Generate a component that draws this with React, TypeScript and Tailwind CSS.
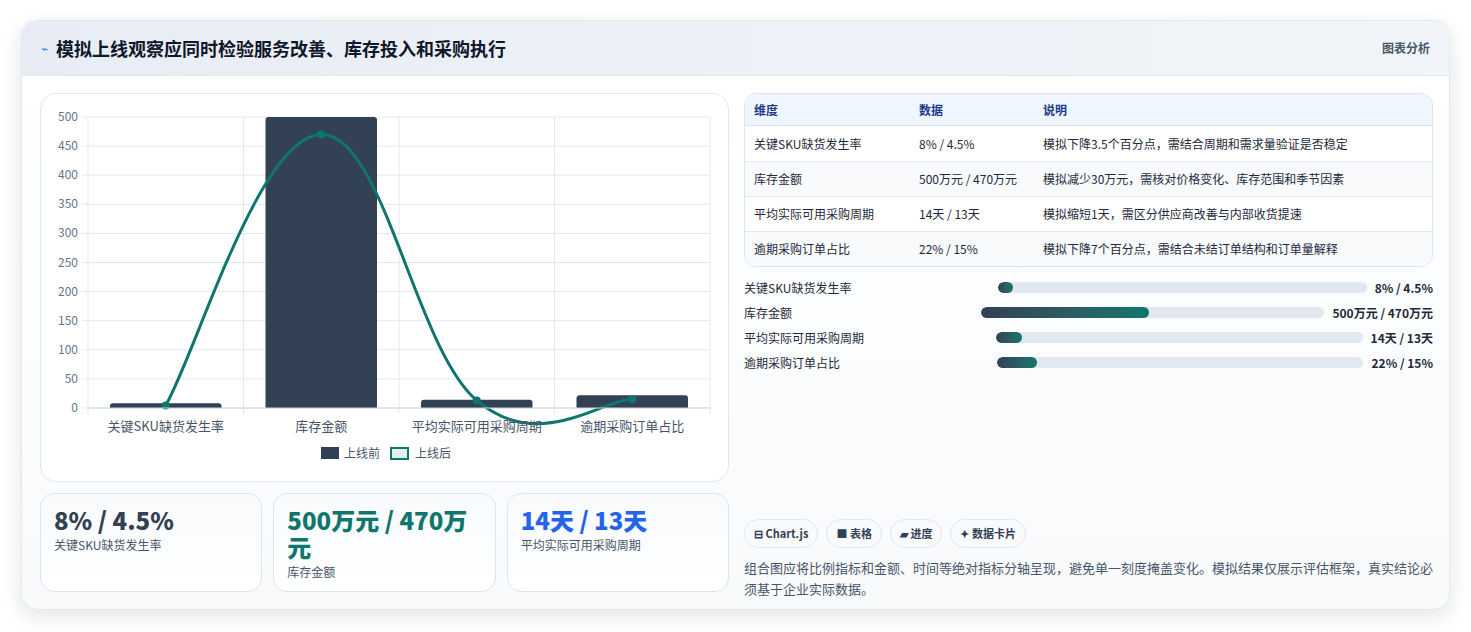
import React from "react";

const F = { fontFamily: '"Noto Sans CJK SC", "Noto Sans", sans-serif' };

function Chart() {
  const L = 47, T = 23, B = 314, R = 669;
  const s = (v: number) => B - v * 0.582;
  const cw = (R - L) / 4;
  const cats = ["关键SKU缺货发生率", "库存金额", "平均实际可用采购周期", "逾期采购订单占比"];
  const before = [8, 500, 14, 22];
  const after = [4.5, 470, 13, 15];
  const pts = after.map((v, i) => [L + cw * (i + 0.5), s(v)]);
  let d = `M${pts[0][0]},${pts[0][1]}`;
  for (let i = 0; i < pts.length - 1; i++) {
    const p0 = pts[i - 1] || pts[i], p1 = pts[i], p2 = pts[i + 1], p3 = pts[i + 2] || p2;
    const t = 0.4 / 1;
    const c1 = [p1[0] + (p2[0] - p0[0]) * t / 2, p1[1] + (p2[1] - p0[1]) * t / 2];
    const c2 = [p2[0] - (p3[0] - p1[0]) * t / 2, p2[1] - (p3[1] - p1[1]) * t / 2];
    d += ` C${c1[0]},${c1[1]} ${c2[0]},${c2[1]} ${p2[0]},${p2[1]}`;
  }
  const ticks = [0, 50, 100, 150, 200, 250, 300, 350, 400, 450, 500];
  return (
    <svg width="688" height="386" style={F}>
      {ticks.map((t) => (
        <g key={t}>
          <line x1={L - 6} x2={R} y1={s(t)} y2={s(t)} stroke="#e2e8f0" />
          <text x={L - 10} y={s(t) + 4} fontSize="12" textAnchor="end" fill="#64748b">{t}</text>
        </g>
      ))}
      {[0, 1, 2, 3, 4].map((i) => (
        <line key={i} x1={L + cw * i} x2={L + cw * i} y1={T} y2={B + 6} stroke="#e2e8f0" />
      ))}
      {before.map((v, i) => (
        <path key={i} d={`M${L + cw * i + 22},${B} V${s(v) + 3} q0,-3 3,-3 H${L + cw * (i + 1) - 25} q3,0 3,3 V${B} Z`} fill="#334155" />
      ))}
      <path d={d} fill="none" stroke="#0f766e" strokeWidth="3" />
      {pts.map((p, i) => <circle key={i} cx={p[0]} cy={p[1]} r="4" fill="#0f766e" />)}
      <line x1={L} x2={R} y1={B} y2={B} stroke="#cbd5e1" />
      {cats.map((c, i) => (
        <text key={c} x={L + cw * (i + 0.5)} y={337} fontSize="13" textAnchor="middle" fill="#475569">{c}</text>
      ))}
      <rect x="280" y="353" width="18" height="12" fill="#334155" />
      <text x="303" y="364" fontSize="12" fill="#475569">上线前</text>
      <rect x="350" y="354" width="17" height="11" fill="#e0efed" stroke="#0f766e" strokeWidth="2" />
      <text x="374" y="364" fontSize="12" fill="#475569">上线后</text>
    </svg>
  );
}

const rows = [
  ["关键SKU缺货发生率", "8% / 4.5%", "模拟下降3.5个百分点，需结合周期和需求量验证是否稳定", 4],
  ["库存金额", "500万元 / 470万元", "模拟减少30万元，需核对价格变化、库存范围和季节因素", 49],
  ["平均实际可用采购周期", "14天 / 13天", "模拟缩短1天，需区分供应商改善与内部收货提速", 7],
  ["逾期采购订单占比", "22% / 15%", "模拟下降7个百分点，需结合未结订单结构和订单量解释", 11],
] as const;

export default function App() {
  return (
    <div className="w-[1471px] h-[632px] bg-white pt-[20px] pl-[21px]" style={F}>
      <div className="w-[1429px] h-[590px] rounded-[16px] border border-[#e2e8f0] shadow-[0_6px_20px_rgba(15,23,42,0.12)] overflow-hidden bg-gradient-to-b from-white to-[#f8fafc]">
        <div className="h-[55px] flex items-center justify-between px-[19px] bg-gradient-to-r from-[#e8edf5] to-[#f1f5f9] border-b border-[#e2e8f0]">
          <div className="flex items-center gap-[8px]">
            <span className="text-[#3b82f6] text-[12px]">⌁</span>
            <span className="text-[18px] font-bold text-[#0f172a]">模拟上线观察应同时检验服务改善、库存投入和采购执行</span>
          </div>
          <span className="text-[12px] font-semibold text-[#475569]">图表分析</span>
        </div>
        <div className="flex gap-[15px] pl-[18px] pt-[17px]">
          <div className="w-[689px] flex flex-col gap-[11px]">
            <div className="h-[389px] rounded-[16px] border border-[#e2e8f0] bg-white overflow-hidden"><Chart /></div>
            <div className="grid grid-cols-3 gap-[11px]">
              {[["8% / 4.5%", "关键SKU缺货发生率", "text-[#334155]"], ["500万元 / 470万元", "库存金额", "text-[#0f766e]"], ["14天 / 13天", "平均实际可用采购周期", "text-[#2563eb]"]].map(([v, l, c]) => (
                <div key={l} className="h-[99px] rounded-[14px] border border-[#dbe5f1] bg-gradient-to-b from-[#f8fafc] to-white px-[13px] pt-[12px]">
                  <div className={`text-[24px] font-extrabold leading-[27px] ${c}`}>{v}</div>
                  <div className="text-[12px] text-[#475569] mt-[3px]">{l}</div>
                </div>
              ))}
            </div>
          </div>
          <div className="w-[689px] flex flex-col">
            <div className="rounded-[12px] border border-[#dbe5f1] overflow-hidden bg-white">
              <div className="flex h-[32px] items-center bg-[#eff6ff] border-b border-[#dbe5f1] text-[12px] font-bold text-[#1e3a8a]">
                <div className="w-[174px] pl-[9px]">维度</div><div className="w-[124px]">数据</div><div>说明</div>
              </div>
              {rows.map((r, i) => (
                <div key={i} className={`flex h-[35px] items-center text-[12px] text-[#1e293b] ${i ? "border-t border-[#e2e8f0]" : ""} ${i % 2 ? "bg-[#f8fafc]" : "bg-white"}`}>
                  <div className="w-[174px] pl-[9px]">{r[0]}</div><div className="w-[124px]">{r[1]}</div><div>{r[2]}</div>
                </div>
              ))}
            </div>
            <div className="flex flex-col gap-[8px] mt-[12px]">
              {rows.map((r, i) => (
                <div key={i} className="flex items-center gap-[8px] h-[17px] text-[12px] text-[#1e293b]">
                  <div className="flex-[2] whitespace-nowrap">{r[0]}</div>
                  <div className="flex-[3] h-[11px] rounded-full bg-[#e2e8f0] overflow-hidden">
                    <div className="h-full rounded-full bg-gradient-to-r from-[#334155] to-[#0f766e]" style={{ width: `${r[3]}%` }} />
                  </div>
                  <div className="font-bold whitespace-nowrap">{r[1]}</div>
                </div>
              ))}
            </div>
            <div className="flex gap-[8px] mt-[148px]">
              {["⊟ Chart.js", "■ 表格", "▰ 进度", "✦ 数据卡片"].map((c) => (
                <span key={c} className="h-[29px] px-[9px] flex items-center rounded-full border border-[#e2e8f0] bg-[#f8fafc] text-[11px] font-bold text-[#334155]">{c}</span>
              ))}
            </div>
            <p className="mt-[9px] text-[13px] leading-[21px] text-[#475569]">组合图应将比例指标和金额、时间等绝对指标分轴呈现，避免单一刻度掩盖变化。模拟结果仅展示评估框架，真实结论必须基于企业实际数据。</p>
          </div>
        </div>
      </div>
    </div>
  );
}
